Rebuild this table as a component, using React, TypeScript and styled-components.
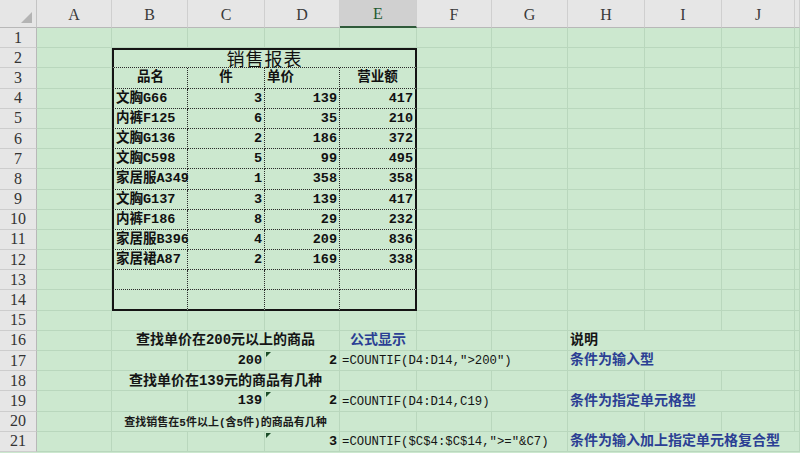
import React from "react";
import styled, { createGlobalStyle, css } from "styled-components";

const COLS = ["A", "B", "C", "D", "E", "F", "G", "H", "I", "J", "K"];
const COL_W = [75, 76, 77, 75, 77, 75, 76, 77, 77, 73];
const ROW_H = 20.2;
const ROWS = 21;

const GRID = "#b9d7bd";
const DOT = "#2a2a2a";
const THICK = "#141414";

type Variant = "title" | "head" | "body" | "note" | "small" | "formula" | "blue" | "plain";
type Align = "left" | "center" | "right";

interface Spec {
  r: number;
  c: number;
  span?: number;
  text?: string;
  align?: Align;
  v?: Variant;
  mark?: boolean;
}

const Global = createGlobalStyle`
  html, body { margin: 0; padding: 0; background: #cce8cf; overflow: hidden; }
  body { font-family: "Liberation Mono", "Noto Sans CJK SC", monospace; }
`;

const Sheet = styled.div`
  display: grid;
  grid-template-columns: 37px ${COL_W.map((w) => w + "px").join(" ")} 1fr;
  grid-template-rows: 28px repeat(${ROWS}, ${ROW_H}px);
  width: 800px;
  height: 453px;
  overflow: hidden;
  background: #cce8cf;
`;

const Corner = styled.div`
  position: relative;
  grid-row: 1;
  grid-column: 1;
  background: #e6e6e6;
  border-right: 1px solid #c4c4c4;
  border-bottom: 1px solid #b8b8b8;
  box-sizing: border-box;
`;

const CornerTri = styled.span`
  position: absolute;
  right: 4px;
  bottom: 4px;
  width: 0;
  height: 0;
  border-left: 11px solid transparent;
  border-bottom: 11px solid #b4b4b4;
`;

const ColHead = styled.div<{ $col: number; $sel?: boolean }>`
  grid-row: 1;
  grid-column: ${(p) => p.$col + 2};
  display: flex;
  align-items: center;
  justify-content: center;
  padding-top: 2px;
  box-sizing: border-box;
  font-family: "Liberation Serif", "DejaVu Serif", serif;
  font-size: 16px;
  color: #3a3a3a;
  background: ${(p) => (p.$sel ? "#d0d0d0" : "#e6e6e6")};
  border-right: 1px solid #cfcfcf;
  border-bottom: ${(p) => (p.$sel ? "2px solid #2f5a3a" : "1px solid #b8b8b8")};
  ${(p) =>
    p.$sel &&
    css`
      color: #1f5a30;
    `}
`;

const RowHead = styled.div<{ $row: number }>`
  grid-row: ${(p) => p.$row + 1};
  grid-column: 1;
  display: flex;
  align-items: center;
  justify-content: center;
  box-sizing: border-box;
  font-family: "Liberation Serif", "DejaVu Serif", serif;
  font-size: 16px;
  color: #333;
  background: #e6e6e6;
  border-right: 1px solid #b8b8b8;
  border-bottom: 1px solid #cdcdcd;
`;

const variantCss: Record<Variant, ReturnType<typeof css>> = {
  title: css`
    font-family: "Noto Sans CJK SC", sans-serif;
    font-size: 18px;
    font-weight: 400;
    line-height: 17px;
    letter-spacing: 1px;
    align-items: center;
    padding-bottom: 0;
    color: #111;
  `,
  head: css`
    font-size: 13.5px;
    font-weight: 700;
    color: #111;
  `,
  body: css`
    font-size: 13.5px;
    font-weight: 700;
    color: #111;
  `,
  note: css`
    font-size: 14px;
    font-weight: 700;
    color: #151515;
  `,
  small: css`
    font-size: 11px;
    font-weight: 700;
    color: #1a1a1a;
  `,
  formula: css`
    font-size: 12.3px;
    font-weight: 400;
    color: #141414;
  `,
  blue: css`
    font-size: 14px;
    font-weight: 700;
    color: #2b3f94;
  `,
  plain: css`
    font-size: 14px;
    font-weight: 700;
    color: #151515;
  `,
};

type Edge = "none" | "grid" | "dot" | "thick";

const edge = (e: Edge) =>
  e === "thick" ? `2px solid ${THICK}` : e === "dot" ? `1px dotted ${DOT}` : e === "grid" ? `1px solid ${GRID}` : "none";

const Cell = styled.div<{
  $row: number;
  $col: number;
  $span: number;
  $align: Align;
  $v: Variant;
  $l: Edge;
  $r: Edge;
  $t: Edge;
  $b: Edge;
}>`
  position: relative;
  grid-row: ${(p) => p.$row + 1};
  grid-column: ${(p) => p.$col + 2} / span ${(p) => p.$span};
  display: flex;
  align-items: flex-end;
  justify-content: ${(p) => (p.$align === "left" ? "flex-start" : p.$align === "right" ? "flex-end" : "center")};
  padding: 0 2px 1px 2px;
  box-sizing: border-box;
  white-space: nowrap;
  min-width: 0;
  line-height: 1.2;
  border-left: ${(p) => edge(p.$l)};
  border-right: ${(p) => edge(p.$r)};
  border-top: ${(p) => edge(p.$t)};
  border-bottom: ${(p) => edge(p.$b)};
  ${(p) => variantCss[p.$v]}
`;

const Marker = styled.span`
  position: absolute;
  left: 1px;
  top: 1px;
  width: 0;
  height: 0;
  border-top: 5px solid #1b4d28;
  border-right: 5px solid transparent;
`;

const rowsData: [string, number, number, number][] = [
  ["文胸G66", 3, 139, 417],
  ["内裤F125", 6, 35, 210],
  ["文胸G136", 2, 186, 372],
  ["文胸C598", 5, 99, 495],
  ["家居服A349", 1, 358, 358],
  ["文胸G137", 3, 139, 417],
  ["内裤F186", 8, 29, 232],
  ["家居服B396", 4, 209, 836],
  ["家居裙A87", 2, 169, 338],
];

const specs: Spec[] = [
  { r: 2, c: 1, span: 4, text: "销售报表", align: "center", v: "title" },
  { r: 3, c: 1, text: "品名", align: "center", v: "head" },
  { r: 3, c: 2, text: "件", align: "center", v: "head" },
  { r: 3, c: 3, text: "单价", align: "left", v: "head" },
  { r: 3, c: 4, text: "营业额", align: "center", v: "head" },
  ...rowsData.flatMap(([name, n, price, total], i) => {
    const r = 4 + i;
    return [
      { r, c: 1, text: name, align: "left" as Align, v: "body" as Variant },
      { r, c: 2, text: String(n), align: "right" as Align, v: "body" as Variant },
      { r, c: 3, text: String(price), align: "right" as Align, v: "body" as Variant },
      { r, c: 4, text: String(total), align: "right" as Align, v: "body" as Variant },
    ];
  }),
  { r: 16, c: 1, span: 3, text: "查找单价在200元以上的商品", align: "center", v: "note" },
  { r: 16, c: 4, text: "公式显示", align: "center", v: "blue" },
  { r: 16, c: 7, span: 3, text: "说明", align: "left", v: "plain" },
  { r: 17, c: 2, text: "200", align: "right", v: "body" },
  { r: 17, c: 3, text: "2", align: "right", v: "body", mark: true },
  { r: 17, c: 4, span: 3, text: '=COUNTIF(D4:D14,">200")', align: "left", v: "formula" },
  { r: 17, c: 7, span: 3, text: "条件为输入型", align: "left", v: "blue" },
  { r: 18, c: 1, span: 3, text: "查找单价在139元的商品有几种", align: "center", v: "note" },
  { r: 19, c: 2, text: "139", align: "right", v: "body" },
  { r: 19, c: 3, text: "2", align: "right", v: "body", mark: true },
  { r: 19, c: 4, span: 3, text: "=COUNTIF(D4:D14,C19)", align: "left", v: "formula" },
  { r: 19, c: 7, span: 3, text: "条件为指定单元格型", align: "left", v: "blue" },
  { r: 20, c: 1, span: 3, text: "查找销售在5件以上(含5件)的商品有几种", align: "center", v: "small" },
  { r: 21, c: 3, text: "3", align: "right", v: "body", mark: true },
  { r: 21, c: 4, span: 3, text: '=COUNTIF($C$4:$C$14,">="&C7)', align: "left", v: "formula" },
  { r: 21, c: 7, span: 4, text: "条件为输入加上指定单元格复合型", align: "left", v: "blue" },
];

const inTable = (r: number, c: number) => r >= 2 && r <= 14 && c >= 1 && c <= 4;

export default function App() {
  const map = new Map<string, Spec>();
  specs.forEach((s) => map.set(`${s.r}-${s.c}`, s));
  const covered = new Set<string>();
  specs.forEach((s) => {
    for (let k = 1; k < (s.span ?? 1); k++) covered.add(`${s.r}-${s.c + k}`);
  });

  const cells: React.ReactNode[] = [];
  for (let r = 1; r <= ROWS; r++) {
    for (let c = 0; c < COLS.length; c++) {
      const key = `${r}-${c}`;
      if (covered.has(key)) continue;
      const s = map.get(key);
      const span = s?.span ?? 1;
      const end = c + span - 1;
      const tbl = inTable(r, c);
      const l: Edge = tbl && c === 1 ? "thick" : "none";
      const rr: Edge = tbl ? (end === 4 ? "thick" : "dot") : "grid";
      const t: Edge = tbl && r === 2 ? "thick" : "none";
      const b: Edge = tbl ? (r === 14 ? "thick" : "dot") : "grid";
      cells.push(
        <Cell
          key={key}
          $row={r}
          $col={c}
          $span={span}
          $align={s?.align ?? "left"}
          $v={s?.v ?? "body"}
          $l={l}
          $r={rr}
          $t={t}
          $b={b}
        >
          {s?.mark && <Marker />}
          {s?.text}
        </Cell>
      );
    }
  }

  return (
    <>
      <Global />
      <Sheet>
        <Corner>
          <CornerTri />
        </Corner>
        {COLS.map((name, i) => (
          <ColHead key={name} $col={i} $sel={name === "E"}>
            {name === "K" ? "" : name}
          </ColHead>
        ))}
        {Array.from({ length: ROWS }, (_, i) => (
          <RowHead key={i} $row={i + 1}>
            {i + 1}
          </RowHead>
        ))}
        {cells}
      </Sheet>
    </>
  );
}
